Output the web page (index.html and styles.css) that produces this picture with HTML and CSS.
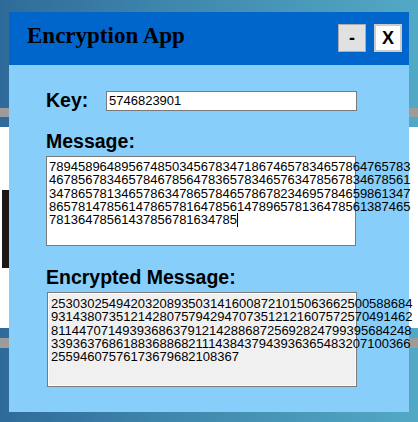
FILE: index.html
```html
<!DOCTYPE html>
<html lang="en">
<head>
<meta charset="utf-8">
<title>Encryption App</title>
<link rel="stylesheet" href="styles.css">
</head>
<body>
<div class="window">
  <div class="titlebar">
    <div class="title">Encryption App</div>
    <div class="controls">
      <button class="btn btn-min">-</button>
      <button class="btn btn-close">X</button>
    </div>
  </div>
  <div class="content">
    <div class="key-row">
      <label class="label key-label">Key:</label>
      <div class="input">5746823901</div>
    </div>
    <div class="label msg-label">Message:</div>
    <div class="textbox message">78945896489567485034567834718674657834657864765783
46785678346578467856478365783465763478567834678561
34786578134657863478657846578678234695784659861347
86578147856147865781647856147896578136478561387465
78136478561437856781634785<span class="caret"></span></div>
    <div class="label enc-label">Encrypted Message:</div>
    <div class="textbox encrypted">25303025494203208935031416008721015063662500588684
93143807351214280757942947073512121607572570491462
81144707149393686379121428868725692824799395684248
33936376861883688682111438437943936365483207100366
25594607576173679682108367</div>
  </div>
</div>
</body>
</html>
```
FILE: styles.css
```css
html, body {
  margin: 0;
  padding: 0;
}
body {
  width: 418px;
  height: 422px;
  overflow: hidden;
  padding: 12px 9px 10px 9px;
  box-sizing: border-box;
  background:
    linear-gradient(#1c1616, #1c1616) 2px 190px / 7px 78px no-repeat,
    linear-gradient(to bottom,
      transparent 0 108px,
      #9e9b9b 108px 117px,
      transparent 117px 127px,
      #ffffff 127px 328px,
      transparent 328px 338px,
      #9e9b9b 338px 348px,
      transparent 348px),
    linear-gradient(to right, #2f6b9a 0%, #3f86ac 40%, #52a9c5 100%);
}
.window {
  width: 400px;
  height: 400px;
  background: #87cefa;
  display: flex;
  flex-direction: column;
}
.titlebar {
  height: 53px;
  background: #0066cc;
  display: flex;
  align-items: flex-start;
  justify-content: space-between;
  padding: 0 7px 0 18px;
  box-sizing: border-box;
}
.title {
  font-family: "Liberation Serif", "Times New Roman", serif;
  font-weight: bold;
  font-size: 23px;
  line-height: 26px;
  margin-top: 11px;
  color: #000;
}
.controls {
  display: flex;
  gap: 8px;
  margin-top: 12px;
}
.btn {
  width: 28px;
  height: 28px;
  padding: 0;
  margin: 0;
  box-sizing: border-box;
  font-family: "Liberation Sans", Arial, sans-serif;
  font-weight: bold;
  font-size: 18px;
  line-height: 1;
  color: #000;
  display: flex;
  align-items: center;
  justify-content: center;
}
.btn-min {
  background: #e1e1e1;
  border: 1px solid #adadad;
}
.btn-close {
  background: #ffffff;
  border: 2px solid #cccccc;
}
.content {
  display: flex;
  flex-direction: column;
  align-items: flex-start;
  padding-left: 37px;
}
.label {
  font-family: "Liberation Sans", Arial, sans-serif;
  font-weight: bold;
  font-size: 19.5px;
  line-height: 20px;
  color: #000;
}
.key-row {
  display: flex;
  align-items: flex-start;
  margin-top: 26px;
  height: 20px;
}
.key-label {
  width: 60px;
  margin-top: -1px;
}
.input {
  width: 251px;
  height: 20px;
  box-sizing: border-box;
  border: 1px solid #7a7a7a;
  background: #fff;
  font-family: "Liberation Sans Narrow", "Arial Narrow", sans-serif;
  font-size: 13px;
  line-height: 18px;
  padding-left: 2px;
  color: #000;
}
.msg-label {
  margin-top: 20px;
}
.textbox {
  width: 310px;
  box-sizing: border-box;
  border: 1px solid #7a7a7a;
  font-family: "Liberation Sans Narrow", "Arial Narrow", sans-serif;
  font-size: 13px;
  line-height: 13.33px;
  white-space: pre-line;
  color: #000;
  padding: 3px 2px 0 2px;
}
.message {
  height: 90px;
  margin-top: 5px;
  background: #fff;
}
.caret {
  display: inline-block;
  width: 1px;
  height: 14px;
  background: #000;
  vertical-align: -3px;
}
.enc-label {
  margin-top: 21px;
}
.encrypted {
  height: 95px;
  margin-top: 5px;
  margin-left: 1px;
  background: #f0f0f0;
  box-shadow: inset 0 0 0 1px #fff;
  padding-top: 4px;
  padding-left: 3px;
}
```
